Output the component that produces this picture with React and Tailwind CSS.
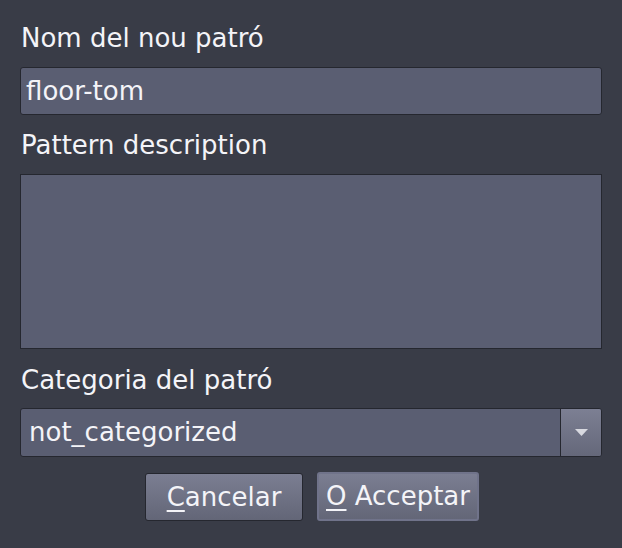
export default function App() {
  return (
    <div
      className="w-[622px] h-[548px] bg-[#393c47] text-[#f4f4f8] px-[20px] pt-[23px] flex flex-col"
      style={{ fontFamily: '"DejaVu Sans", sans-serif' }}
    >
      <label className="text-[26px] leading-[30px] pl-[1px]">Nom del nou patró</label>
      <div className="mt-[14px] h-[48px] rounded-[3px] border border-[#25272f] bg-[#5a5e72] flex items-center px-[5px] text-[26px]">
        floor-tom
      </div>

      <label className="mt-[15px] text-[26px] leading-[30px] pl-[1px]">Pattern description</label>
      <div className="mt-[14px] h-[175px] border border-[#25272f] bg-[#5a5e72]" />

      <label className="mt-[16px] text-[26px] leading-[30px] pl-[1px]">Categoria del patró</label>
      <div className="mt-[13px] h-[49px] rounded-[3px] border border-[#25272f] bg-[#5a5e72] flex">
        <div className="flex-1 flex items-center pl-[8px] text-[26px] border-r border-[#25272f]">
          not_categorized
        </div>
        <div className="w-[40px] rounded-r-[2px] bg-gradient-to-b from-[#7c7f93] to-[#65687a] flex items-center justify-center">
          <svg width="13" height="7" viewBox="0 0 13 7">
            <path d="M0 0h13L6.5 7z" fill="#d8d9e0" />
          </svg>
        </div>
      </div>

      <div className="mt-[16px] flex justify-center gap-[14px] pl-[2px]">
        <button className="w-[158px] h-[48px] rounded-[3px] border border-[#25272f] bg-gradient-to-b from-[#7b7e92] to-[#636677] text-[26px] flex items-center justify-center">
          <span>
            <span className="underline underline-offset-[4px] decoration-2">C</span>ancelar
          </span>
        </button>
        <button className="w-[162px] h-[49px] -mt-[1px] rounded-[3px] border-2 border-[#70738a] bg-gradient-to-b from-[#7b7e92] to-[#636677] text-[26px] flex items-center justify-center">
          <span>
            <span className="underline underline-offset-[4px] decoration-2">O</span> Acceptar
          </span>
        </button>
      </div>
    </div>
  );
}
